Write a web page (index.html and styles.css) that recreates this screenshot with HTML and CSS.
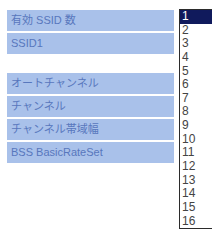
FILE: index.html
```html
<!DOCTYPE html>
<html lang="ja">
<head>
    <meta charset="UTF-8">
    <title>無線設定</title>
    <link rel="stylesheet" href="styles.css">
</head>
<body>
    <div class="page">
        <div class="labels">
            <div class="label">有効 SSID 数</div>
            <div class="label">SSID1</div>
            <div class="spacer"></div>
            <div class="label">オートチャンネル</div>
            <div class="label">チャンネル</div>
            <div class="label">チャンネル帯域幅</div>
            <div class="label">BSS BasicRateSet</div>
        </div>

        <ul class="listbox">
            <li class="option selected">1</li>
            <li class="option">2</li>
            <li class="option">3</li>
            <li class="option">4</li>
            <li class="option">5</li>
            <li class="option">6</li>
            <li class="option">7</li>
            <li class="option">8</li>
            <li class="option">9</li>
            <li class="option">10</li>
            <li class="option">11</li>
            <li class="option">12</li>
            <li class="option">13</li>
            <li class="option">14</li>
            <li class="option">15</li>
            <li class="option">16</li>
        </ul>
    </div>
</body>
</html>
```

FILE: styles.css
```css
body {
    margin: 0;
    background-color: white;
    font-family: "Liberation Sans", "Noto Sans CJK JP", sans-serif;
    overflow: hidden;
}

.page {
    display: flex;
    align-items: flex-start;
    padding-top: 9px;
    width: 212px;
}

.labels {
    display: flex;
    flex-direction: column;
    gap: 2px;
    width: 167px;
    margin-left: 7px;
    margin-top: 1px;
}

.label {
    height: 21px;
    line-height: 21px;
    padding-left: 4px;
    background-color: #a9c1ea;
    color: #5877bd;
    font-size: 11px;
    white-space: nowrap;
}

.spacer {
    height: 15px;
}

.listbox {
    flex: 1;
    list-style-type: none; /* no bullets */
    margin: 0 0 0 5px;
    padding: 0;
    border: 1px solid #2b2b2b;
    border-right: none;
}

.option {
    height: 13.65px;
    line-height: 13.65px;
    padding-left: 2px;
    font-size: 12px;
    color: #444;
}

.selected {
    background-color: #101a5c;
    color: white;
}
```
